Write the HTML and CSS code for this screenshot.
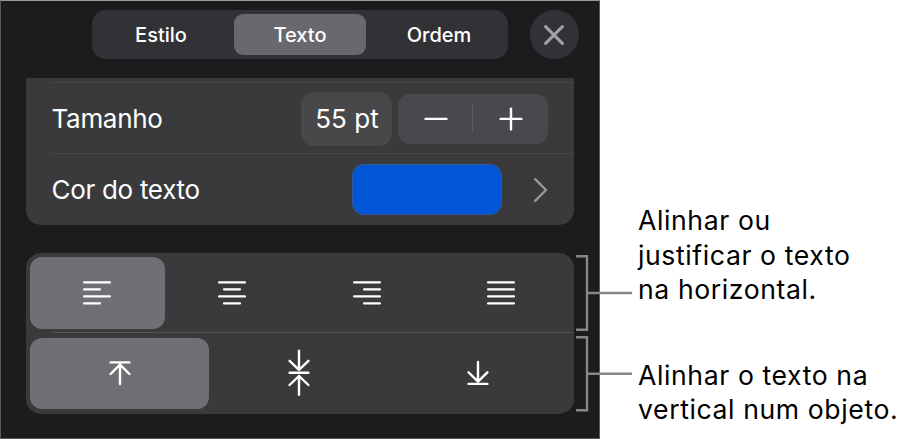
FILE: index.html
```html
<!DOCTYPE html>
<html lang="pt">

<head>
    <meta charset="UTF-8">
    <meta name="viewport" content="width=device-width, initial-scale=1.0">
    <title>Texto</title>
    <link rel="stylesheet" href="styles.css">
</head>

<body>
    <main class="panel">
        <header class="top-bar">
            <nav class="tabs">
                <button class="tab tab-style">Estilo</button>
                <button class="tab active">Texto</button>
                <button class="tab tab-order">Ordem</button>
            </nav>
            <button class="close-button" aria-label="Fechar">
                <svg width="20" height="20" viewBox="0 0 20 20"><path d="M1.6 1.6L18.4 18.4M18.4 1.6L1.6 18.4" /></svg>
            </button>
        </header>

        <section class="card settings">
            <div class="row size-row">
                <span class="label">Tamanho</span>
                <span class="value">55 pt</span>
                <div class="stepper">
                    <button aria-label="Diminuir"><svg width="24" height="24" viewBox="0 0 24 24"><path d="M1.6 11.9H22.4" /></svg></button>
                    <button aria-label="Aumentar"><svg width="24" height="24" viewBox="0 0 24 24"><path d="M1.6 11.9H22.4M12 1.6V22.4" /></svg></button>
                </div>
            </div>
            <div class="row color-row">
                <span class="label">Cor do texto</span>
                <span class="swatch"></span>
                <svg class="chevron" width="14" height="24" viewBox="0 0 14 24"><path d="M1.2 1.2L12 12L1.2 22.8" /></svg>
            </div>
        </section>

        <section class="card alignment">
            <div class="options horizontal">
                <button class="option active" aria-label="Esquerda">
                    <svg width="28" height="24" viewBox="0 0 28 24"><path d="M1 1.4H27M1 8.4H17M1 15.4H27M1 22.4H17" /></svg>
                </button>
                <button class="option" aria-label="Centro">
                    <svg width="28" height="24" viewBox="0 0 28 24"><path d="M1 1.4H27M6 8.4H22M1 15.4H27M6 22.4H22" /></svg>
                </button>
                <button class="option" aria-label="Direita">
                    <svg width="28" height="24" viewBox="0 0 28 24"><path d="M1 1.4H27M11 8.4H27M1 15.4H27M11 22.4H27" /></svg>
                </button>
                <button class="option" aria-label="Justificar">
                    <svg width="28" height="24" viewBox="0 0 28 24"><path d="M1 1.4H27M1 8.4H27M1 15.4H27M1 22.4H27" /></svg>
                </button>
            </div>
            <div class="options vertical">
                <button class="option active" aria-label="Topo">
                    <svg width="22" height="26" viewBox="0 0 22 26"><path d="M1.6 2.4H20.4M11 4.4V24M1.6 14L11 4.6L20.4 14" /></svg>
                </button>
                <button class="option" aria-label="Meio">
                    <svg width="22" height="48" viewBox="0 0 22 48"><path d="M1.6 23.8H20.4M11 1.8V20.6M11 27V45.8M1.6 11.8L11 20.8L20.4 11.8M1.6 36L11 27L20.4 36" /></svg>
                </button>
                <button class="option" aria-label="Base">
                    <svg width="22" height="26" viewBox="0 0 22 26"><path d="M1.6 23.9H20.4M11 2V21.5M1.6 12.3L11 21.7L20.4 12.3" /></svg>
                </button>
            </div>
        </section>
    </main>

    <aside class="callouts">
        <p class="callout">
            Alinhar ou<br>
            justificar o texto<br>
            na horizontal.
        </p>
        <p class="callout second">
            Alinhar o texto na<br>
            vertical num objeto.
        </p>
    </aside>

    <!-- brackets and leader lines over the panel -->
    <svg class="brackets" width="58" height="158" viewBox="0 0 58 158">
        <path d="M1 2.2H12V75.8H1M12 39H57" />
        <path d="M1 83.2H12V156.2H1M12 119.7H57" />
    </svg>
</body>

</html>
```
FILE: styles.css
```css
* {
    box-sizing: border-box;
}

body {
    position: relative;
    display: flex;
    width: 902px;
    height: 439px;
    margin: 0;
    overflow: hidden;
    background-color: #fff;
    font-family: Inter, "Liberation Sans", sans-serif;
}

button {
    display: flex;
    align-items: center;
    justify-content: center;
    margin: 0;
    padding: 0;
    border: none;
    background: none;
    color: #fff;
    font-family: inherit;
}

svg {
    display: block;
    fill: none;
    stroke: #fff;
    stroke-width: 2.4;
    stroke-linecap: round;
    stroke-linejoin: round;
}

.panel {
    flex: none;
    width: 600px;
    height: 439px;
    padding: 9px 25px 0 24.5px;
    border: 1px solid #58585a;
    border-top-color: #98999b;
    background-color: #1c1c1e;
}

.top-bar {
    display: flex;
    justify-content: space-between;
    height: 48.5px;
    margin-left: 66.5px;
    margin-right: -4.5px;
}

.tabs {
    display: grid;
    grid-template-columns: 138.5px 131.5px 138.5px;
    justify-content: center;
    width: 416px;
    padding: 3.5px 0;
    border-radius: 14px;
    background-color: #323136;
}

.tab {
    padding-top: 2px;
    border-radius: 9px;
    font-size: 20px;
    font-weight: 500;
}

.tab.active {
    background-color: #69686e;
}

.tab-style {
    padding-right: 8px;
}

.tab-order {
    padding-left: 8px;
}

.close-button {
    width: 48.5px;
    padding-top: 1px;
    border-radius: 50%;
    background-color: #323136;
}

.close-button svg {
    stroke: #a0a0a6;
    stroke-width: 3;
}

.card {
    background-color: #3a3a3c;
}

.settings {
    height: 146.5px;
    margin-top: 19.5px;
    padding-top: 4px;
    border-radius: 0 0 15px 15px;
}

.row {
    display: flex;
    align-items: center;
    height: 71px;
    margin-left: 25.5px;
    padding-top: 1px;
    padding-right: 26px;
    border-top: 1px solid #464648;
    color: #fff;
}

.label {
    flex: 1;
    padding-left: 0.5px;
    font-size: 26px;
    letter-spacing: -0.3px;
}

.value {
    display: flex;
    align-items: center;
    justify-content: center;
    width: 91px;
    height: 54px;
    margin-right: 6px;
    padding-left: 1px;
    border-radius: 13px;
    background-color: #48484b;
    font-size: 26px;
}

.stepper {
    display: flex;
    width: 150px;
    height: 50px;
    border-radius: 12px;
    background-color: #49484d;
}

.stepper button {
    position: relative;
    flex: 1;
}

.stepper button + button::before {
    content: "";
    position: absolute;
    left: -1px;
    top: 11px;
    width: 1px;
    height: 28px;
    background-color: #5c5b60;
}

.swatch {
    width: 150px;
    height: 50.5px;
    margin-right: 31.8px;
    border: 1px solid #335a9c;
    border-radius: 12px;
    background-color: #0056d6;
}

.chevron {
    stroke: #98989c;
}

.alignment {
    height: 161px;
    margin-top: 28px;
    border-radius: 15px;
}

.options {
    display: grid;
    padding-left: 4.5px;
}

.horizontal {
    grid-template-columns: repeat(4, 134.7px);
    height: 80px;
    padding-top: 4.5px;
    padding-bottom: 4px;
    background: linear-gradient(#525254, #525254) 25.5px 100% / 100% 1px no-repeat;
}

.vertical {
    grid-template-columns: repeat(3, 179.4px);
    height: 81px;
    padding-top: 5px;
    padding-bottom: 4.5px;
}

.option {
    border-radius: 12px;
}

.option.active {
    background-color: #707074;
}

.horizontal svg {
    stroke-width: 2.1;
}

.callouts {
    padding: 203px 0 0 38px;
    white-space: nowrap;
    color: #000;
}

.callout {
    margin: 0;
    font-size: 26.6px;
    line-height: 34.7px;
    letter-spacing: 0.6px;
}

.second {
    margin-top: 50.5px;
}

.brackets {
    position: absolute;
    left: 575px;
    top: 254px;
    stroke: #868686;
    stroke-linecap: butt;
    stroke-linejoin: miter;
}
```
